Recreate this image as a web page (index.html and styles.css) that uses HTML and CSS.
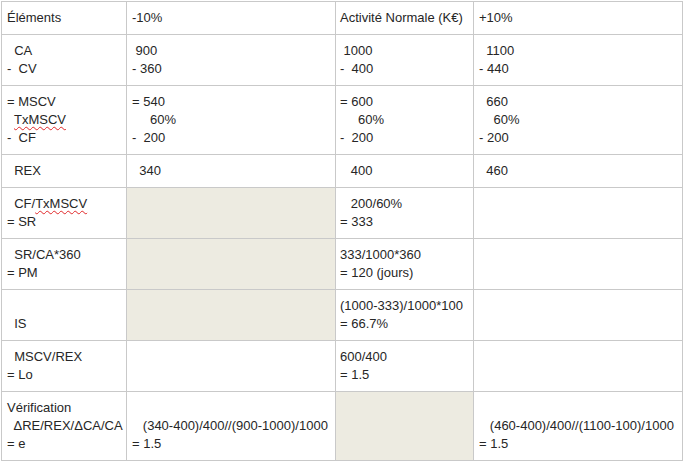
FILE: index.html
```html
<!DOCTYPE html>
<html lang="fr">
<head>
<meta charset="utf-8">
<title>Tableau</title>
<link rel="stylesheet" href="styles.css">
</head>
<body>
<table class="sheet">
  <colgroup>
    <col class="c1"><col class="c2"><col class="c3"><col class="c4">
  </colgroup>
  <tr>
    <td><div class="ln">Éléments</div></td>
    <td><div class="ln">-10%</div></td>
    <td class="n3"><div class="ln">Activité Normale (K€)</div></td>
    <td><div class="ln">+10%</div></td>
  </tr>
  <tr>
    <td><div class="ln">  CA</div><div class="ln">-  CV</div></td>
    <td><div class="ln"> 900</div><div class="ln">- 360</div></td>
    <td class="n3"><div class="ln"> 1000</div><div class="ln">-  400</div></td>
    <td><div class="ln">  1100</div><div class="ln">- 440</div></td>
  </tr>
  <tr>
    <td><div class="ln">= MSCV</div><div class="ln">  <span class="sp">TxMSCV</span></div><div class="ln">-  CF</div></td>
    <td><div class="ln">= 540</div><div class="ln">     60%</div><div class="ln">-  200</div></td>
    <td class="n3"><div class="ln">= 600</div><div class="ln">     60%</div><div class="ln">-  200</div></td>
    <td><div class="ln">  660</div><div class="ln">    60%</div><div class="ln">- 200</div></td>
  </tr>
  <tr>
    <td><div class="ln">  REX</div></td>
    <td><div class="ln">  340</div></td>
    <td class="n3"><div class="ln">   400</div></td>
    <td><div class="ln">  460</div></td>
  </tr>
  <tr>
    <td><div class="ln">  CF/<span class="sp">TxMSCV</span></div><div class="ln">= SR</div></td>
    <td class="shade"></td>
    <td class="n3"><div class="ln">   200/60%</div><div class="ln">= 333</div></td>
    <td></td>
  </tr>
  <tr>
    <td><div class="ln">  SR/CA*360</div><div class="ln">= PM</div></td>
    <td class="shade"></td>
    <td class="n3"><div class="ln">333/1000*360</div><div class="ln">= 120 (jours)</div></td>
    <td></td>
  </tr>
  <tr>
    <td><div class="ln"> </div><div class="ln">  IS</div></td>
    <td class="shade"></td>
    <td class="n3"><div class="ln">(1000-333)/1000*100</div><div class="ln">= 66.7%</div></td>
    <td></td>
  </tr>
  <tr>
    <td><div class="ln">  MSCV/REX</div><div class="ln">= Lo</div></td>
    <td></td>
    <td class="n3"><div class="ln">600/400</div><div class="ln">= 1.5</div></td>
    <td></td>
  </tr>
  <tr>
    <td><div class="ln">Vérification</div><div class="ln">  ΔRE/REX/ΔCA/CA</div><div class="ln">= e</div></td>
    <td><div class="ln"> </div><div class="ln">   (340-400)/400//(900-1000)/1000</div><div class="ln">= 1.5</div></td>
    <td class="shade"></td>
    <td><div class="ln"> </div><div class="ln">   (460-400)/400//(1100-100)/1000</div><div class="ln">= 1.5</div></td>
  </tr>
</table>
</body>
</html>
```
FILE: styles.css
```css
html, body {
  margin: 0;
  padding: 0;
  background: #ffffff;
}
body {
  padding: 1px 0 0 1px;
  font-family: "Liberation Sans", Arial, sans-serif;
  font-size: 13px;
  color: #262626;
}
.sheet {
  border-collapse: collapse;
  table-layout: fixed;
  width: 682px;
}
.c1 { width: 125px; }
.c2 { width: 209px; }
.c3 { width: 138px; }
.c4 { width: 209px; }
.sheet td {
  border: 1px solid #c9c9c9;
  padding: 7px 3px 7px 5px;
  vertical-align: top;
}
.sheet td.n3 {
  padding-left: 4px;
}
.sheet td.shade {
  background: #edebe1;
}
.ln {
  height: 18px;
  line-height: 18px;
  white-space: pre;
}
.sp {
  text-decoration: underline wavy #e0282a;
  text-decoration-thickness: 1px;
  text-underline-offset: 2px;
}
```
